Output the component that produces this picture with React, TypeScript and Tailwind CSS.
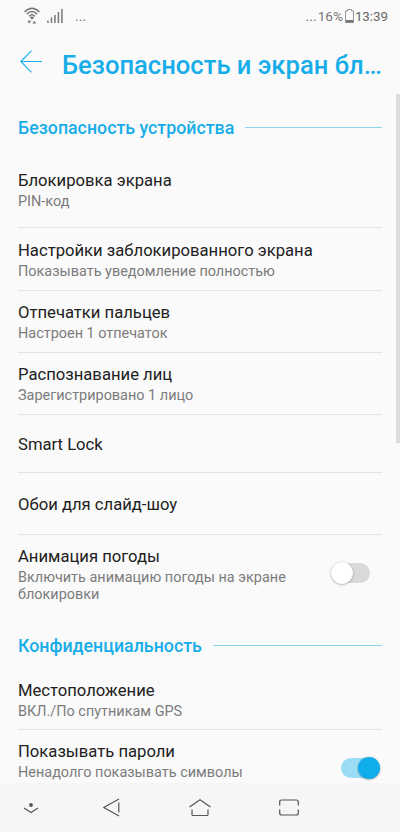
import React, { ReactNode } from 'react';

interface RowProps {
  className: string;
  title: string;
  summary?: string;
  last?: boolean;
  children?: ReactNode;
}

const Row = ({ className, title, summary, last, children }: RowProps) => (
  <li
    className={`mr-[14px] ml-[18px] flex shrink-0 justify-between ${
      last ? '' : 'border-b border-[#e4e4e4]'
    } ${className}`}
  >
    <div className="min-w-0">
      <div className="text-[16.65px] leading-6 whitespace-nowrap text-[#212121]">
        {title}
      </div>
      {summary && (
        <div className="max-w-[290px] text-[14.45px] leading-[17px] text-[#7c7c7c]">
          {summary}
        </div>
      )}
    </div>
    {children}
  </li>
);

const SectionHeader = ({ title }: { title: string }) => (
  <div className="mr-[14px] ml-[18px] flex h-5 shrink-0 items-center gap-[11px]">
    <h2 className="text-[17.8px] leading-5 font-medium whitespace-nowrap text-[#17ade9]">
      {title}
    </h2>
    <div className="-mt-px h-px flex-1 bg-[#8ad6ef]" />
  </div>
);

const Switch = ({ checked }: { checked: boolean }) => (
  <div
    className={`flex h-5 w-[39px] shrink-0 items-center rounded-full ${
      checked ? 'justify-end bg-[#9bddf5]' : 'bg-[#d9d9d9]'
    }`}
  >
    <div
      className={`h-[22px] w-[22px] shrink-0 rounded-full shadow-[0_0.5px_2px_rgba(0,0,0,0.4)] ${
        checked ? 'bg-[#0fadeb]' : 'bg-white'
      }`}
    />
  </div>
);

const StatusBar = () => (
  <div className="flex h-8 shrink-0 items-center pr-3 pl-6 text-[#757575]">
    <svg width="16" height="18" viewBox="0 0 16 18" fill="none" stroke="currentColor">
      <path d="M0.5 5Q8 -2.5 15.5 5M2.7 7.2Q8 1.8 13.3 7.2M5 9.2Q8 6.4 11 9.2" strokeWidth="1.4" />
      <path d="M5.8 10.3Q8 8.8 10.2 10.3L8 12.8zM3.3 13.8h4l-2 2.8zM8.3 16.6h4l-2-2.8z" fill="currentColor" stroke="none" />
    </svg>
    <svg className="ml-[7px]" width="16" height="14" viewBox="0 0 16 14" fill="currentColor">
      <path d="M0.2 11.5h1.5V14H0.2zM3.7 8.5h1.5V14H3.7zM7.2 6h1.5v8H7.2zM10.7 3h1.5v11h-1.5zM14.2 0h1.5v14h-1.5z" />
    </svg>
    <span className="ml-3 text-[14px] leading-4">...</span>
    <span className="ml-auto text-[14px] leading-4">...</span>
    <span className="ml-px text-[13.6px] leading-4">16%</span>
    <svg className="mr-px ml-0.5" width="9" height="14" viewBox="0 0 9 14" fill="none" stroke="currentColor">
      <path d="M0.5 2h2V0.5h4V2h2v11.5h-8z" opacity="0.75" />
      <path d="M1 11h7v2.5H1z" fill="currentColor" stroke="none" />
    </svg>
    <span className="mt-px text-[13.3px] leading-4 text-[#666]">13:39</span>
  </div>
);

const NavigationBar = () => (
  <nav className="flex h-[49px] shrink-0 items-center bg-[#f6f6f6] pl-6 text-[#555]">
    <svg className="mt-0.5" width="14" height="11" viewBox="0 0 14 11" fill="none" stroke="currentColor">
      <path d="M0 5l7 4.5L14 5" strokeWidth="1.2" />
      <circle cx="7" cy="2" r="1.9" fill="currentColor" stroke="none" />
    </svg>
    <svg className="ml-[65px]" width="17" height="19" viewBox="0 0 17 19" fill="none" stroke="currentColor" strokeWidth="1.2">
      <path d="M16 1L0.8 9.5 16 18M15.8 4.5v10" />
    </svg>
    <svg className="ml-[69px]" width="22" height="18" viewBox="0 0 22 18" fill="none" stroke="currentColor" strokeWidth="1.2">
      <path d="M0.5 8L11 0.8 21.5 8M3 10.5v5q0 1 1 1h14q1 0 1-1v-5" />
    </svg>
    <svg className="ml-[68px]" width="20" height="17" viewBox="0 0 20 17" fill="none" stroke="currentColor" strokeWidth="1.2">
      <path d="M0.7 6.5V3q0-2 2-2h14.6q2 0 2 2v3.5M0.7 10.5V14q0 2 2 2h14.6q2 0 2-2v-3.5" />
    </svg>
  </nav>
);

export default function App() {
  return (
    <div className="flex h-[832px] w-[400px] flex-col overflow-hidden bg-[#fafafa] font-['Roboto',sans-serif]">
      <StatusBar />
      <header className="flex h-[62px] shrink-0 items-center pr-3 pl-5 text-[#17ade9]">
        <svg className="-mt-1" width="23" height="23" viewBox="0 0 23 23" fill="none" stroke="currentColor">
          <path d="M11.5 0.7L0.8 11.5l10.7 10.8M0.8 11.5H22" strokeWidth="1.1" />
        </svg>
        <h1 className="ml-[19px] pt-1 text-[25.6px] leading-8 font-medium whitespace-nowrap">
          Безопасность и экран бл…
        </h1>
      </header>
      <main className="flex min-h-0 flex-1 overflow-hidden">
        <div className="flex w-[396px] shrink-0 flex-col pt-6">
          <SectionHeader title="Безопасность устройства" />
          <ul className="flex flex-col">
            <Row className="h-[90px] pt-[31px]" title="Блокировка экрана" summary="PIN-код" />
            <Row className="h-[63px] pt-[11px]" title="Настройки заблокированного экрана" summary="Показывать уведомление полностью" />
            <Row className="h-[62px] pt-[10px]" title="Отпечатки пальцев" summary="Настроен 1 отпечаток" />
            <Row className="h-[62px] pt-[10px]" title="Распознавание лиц" summary="Зарегистрировано 1 лицо" />
            <Row className="h-[58px] pt-[18px]" title="Smart Lock" />
            <Row className="h-[62px] pt-[20px]" title="Обои для слайд-шоу" />
            <Row
              className="h-[101px] pt-[10px]"
              title="Анимация погоды"
              summary="Включить анимацию погоды на экране блокировки"
              last
            >
              <div className="mt-[18px] mr-3">
                <Switch checked={false} />
              </div>
            </Row>
          </ul>
          <SectionHeader title="Конфиденциальность" />
          <ul className="flex flex-col">
            <Row className="h-[74px] pt-[23px]" title="Местоположение" summary="ВКЛ./По спутникам GPS" />
            <Row className="h-[62px] pt-[10px]" title="Показывать пароли" summary="Ненадолго показывать символы" last>
              <div className="mt-[18px] mr-0.5">
                <Switch checked />
              </div>
            </Row>
          </ul>
        </div>
        <div className="h-[349px] w-1 bg-[#dcdcdc]" />
      </main>
      <NavigationBar />
    </div>
  );
}
